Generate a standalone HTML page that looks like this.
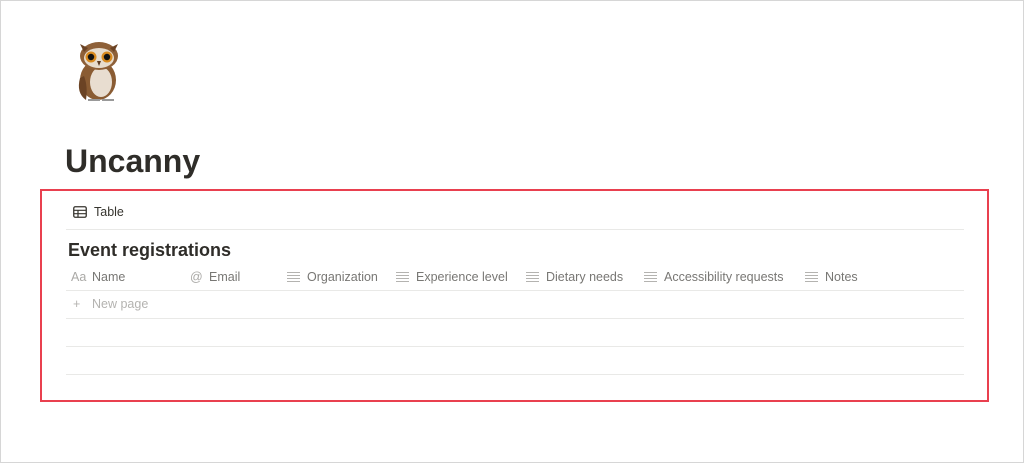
<!DOCTYPE html>
<html><head><style>
*{margin:0;padding:0;box-sizing:border-box}
body{width:1024px;height:463px;background:#fff;font-family:"Liberation Sans",sans-serif;position:relative;overflow:hidden;color:#37352f}
.frame{position:absolute;left:0;top:0;width:1024px;height:463px;border:1px solid #d6d6d6}
.red{position:absolute;left:40px;top:189px;width:949px;height:213px;border:2px solid #e9404f}
.abs{position:absolute;white-space:nowrap}
.line{position:absolute;left:66px;width:898px;height:1px;background:#e9e9e7}
.h{font-size:12.5px;color:#787774}
.ic{color:#aaa9a6}
.lines{display:inline-block;width:13px;height:10px;vertical-align:-1px;margin-right:7px;background:linear-gradient(#b4b3b0 0 1.2px,transparent 1.2px 3px,#b4b3b0 3px 4.2px,transparent 4.2px 6px,#b4b3b0 6px 7.2px,transparent 7.2px 8.8px,#b4b3b0 8.8px 10px);}
</style></head><body>
<div class="frame"></div>
<svg class="abs" style="left:74px;top:38px" width="50" height="68" viewBox="0 0 50 68">
<ellipse cx="24" cy="42" rx="18" ry="20" fill="#8a5c33"/>
<ellipse cx="27" cy="44" rx="11" ry="15" fill="#e8ddd0"/>
<path d="M6 40 Q2 55 12 62 Q14 48 10 38Z" fill="#6b4324"/>
<ellipse cx="25" cy="18" rx="19" ry="14" fill="#8e6038"/>
<path d="M6 6 L14 10 L10 14Z M44 6 L36 10 L40 14Z" fill="#6b4324"/>
<ellipse cx="25" cy="20" rx="15" ry="10" fill="#e7dccd"/>
<circle cx="17" cy="19" r="5.5" fill="#d88a1f"/><circle cx="33" cy="19" r="5.5" fill="#d88a1f"/>
<circle cx="17" cy="19" r="3.2" fill="#111"/><circle cx="33" cy="19" r="3.2" fill="#111"/>
<path d="M23 23 L27 23 L25 28Z" fill="#5a3a22"/>
<path d="M14 62 L26 62 M28 62 L40 62" stroke="#999" stroke-width="2"/>
</svg>
<div class="abs" style="left:65px;top:143px;font-size:32px;font-weight:bold;color:#2f2d29">Uncanny</div>
<div class="red"></div>
<svg class="abs" style="left:73px;top:206px" width="14" height="12" viewBox="0 0 14 12"><rect x="0.75" y="0.75" width="12.5" height="10.5" rx="1.5" fill="none" stroke="#37352f" stroke-width="1.3"/><path d="M1 4.3H13M1 7.7H13M5 4.3V11" stroke="#37352f" stroke-width="1.2"/></svg>
<div class="abs" style="left:94px;top:205px;font-size:12.5px">Table</div>
<div class="line" style="top:229px"></div>
<div class="abs" style="left:68px;top:240px;font-size:18px;font-weight:bold;color:#2f2d29">Event registrations</div>
<div class="abs h ic" style="left:71px;top:270px">Aa</div>
<div class="abs h" style="left:92px;top:270px">Name</div>
<div class="abs h ic" style="left:190px;top:270px">@</div>
<div class="abs h" style="left:209px;top:270px">Email</div>
<div class="abs h" style="left:287px;top:270px"><span class="lines"></span>Organization</div>
<div class="abs h" style="left:396px;top:270px"><span class="lines"></span>Experience level</div>
<div class="abs h" style="left:526px;top:270px"><span class="lines"></span>Dietary needs</div>
<div class="abs h" style="left:644px;top:270px"><span class="lines"></span>Accessibility requests</div>
<div class="abs h" style="left:805px;top:270px"><span class="lines"></span>Notes</div>
<div class="line" style="top:290px"></div>
<div class="abs" style="left:73px;top:297px;font-size:12.5px;color:#b4b3b0">+</div>
<div class="abs" style="left:92px;top:297px;font-size:12.5px;color:#b4b3b0">New page</div>
<div class="line" style="top:318px"></div>
<div class="line" style="top:346px"></div>
<div class="line" style="top:374px"></div>
</body></html>
